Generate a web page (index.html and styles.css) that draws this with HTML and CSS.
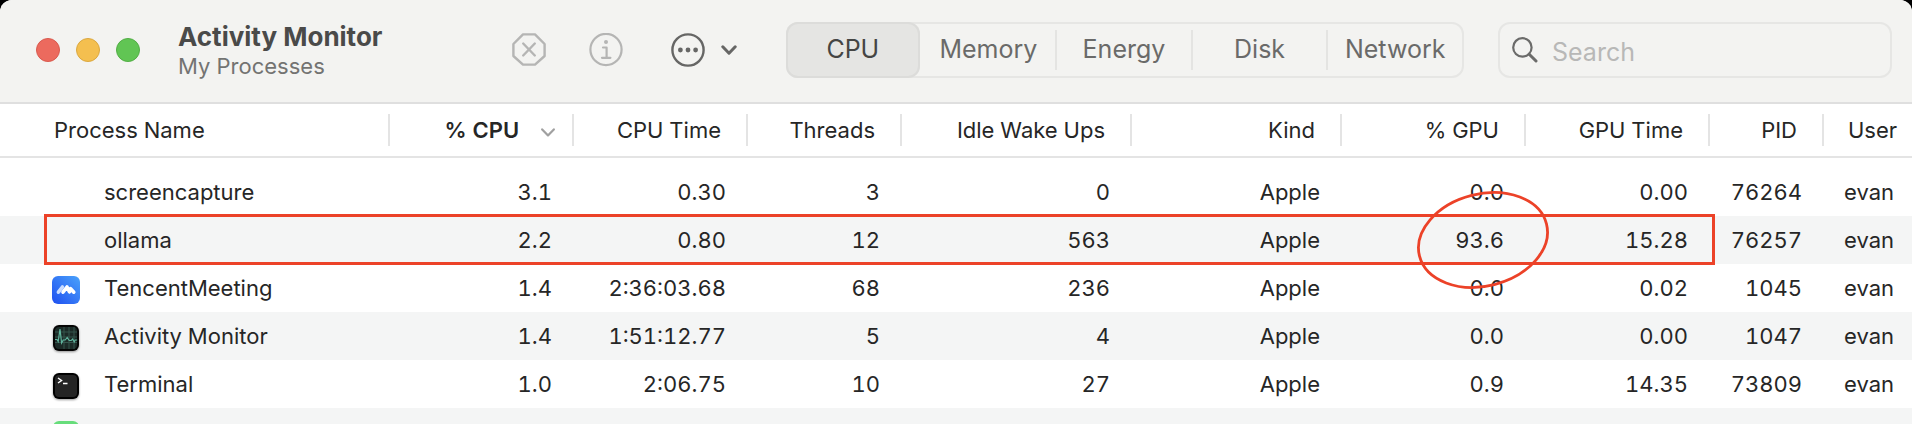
FILE: index.html
```html
<!DOCTYPE html>
<html lang="en">
<head>
    <meta charset="UTF-8">
    <meta name="viewport" content="width=device-width, initial-scale=1.0">
    <title>Activity Monitor</title>
    <link rel="stylesheet" href="styles.css">
</head>
<body>
    <div class="window">
        <header class="toolbar">
            <div class="lights">
                <button class="light red" aria-label="Close"></button>
                <button class="light yellow" aria-label="Minimize"></button>
                <button class="light green" aria-label="Zoom"></button>
            </div>
            <div class="titles">
                <h1>Activity Monitor</h1>
                <p>My Processes</p>
            </div>
            <div class="actions">
                <button class="icon-btn" aria-label="Stop process" disabled>
                    <svg width="34" height="34" viewBox="0 0 34 34" fill="none" stroke="#b5b5b4" stroke-width="2.4" stroke-linecap="round" stroke-linejoin="round">
                        <path d="M11 1.4h12L32.6 11v12L23 31.6H11L1.4 23V11z"/>
                        <path d="M11.2 10.5l11.6 12M22.8 10.5l-11.6 12"/>
                    </svg>
                </button>
                <button class="icon-btn" aria-label="Inspect process" disabled>
                    <svg width="34" height="34" viewBox="0 0 34 34" fill="none" stroke="#b5b5b4" stroke-width="2.2" stroke-linecap="round" stroke-linejoin="round">
                        <circle cx="17" cy="16.5" r="15.6"/>
                        <path d="M14 14.5h3.6v10M13 24.8h8.4"/>
                        <circle cx="17" cy="9" r="2" fill="#b5b5b4" stroke="none"/>
                    </svg>
                </button>
                <button class="icon-btn more" aria-label="More options">
                    <svg width="34" height="34" viewBox="0 0 34 34" fill="none" stroke="#666665" stroke-width="2.4">
                        <circle cx="17" cy="17" r="15.6"/>
                        <g fill="#666665" stroke="none">
                            <circle cx="9.4" cy="17" r="2.4"/>
                            <circle cx="17" cy="17" r="2.4"/>
                            <circle cx="24.6" cy="17" r="2.4"/>
                        </g>
                    </svg>
                    <svg width="16" height="10" viewBox="0 0 16 10" fill="none" stroke="#666665" stroke-width="3" stroke-linecap="round" stroke-linejoin="round">
                        <path d="M1.8 1.8L8 8.2l6.2-6.4"/>
                    </svg>
                </button>
            </div>
            <nav class="tabs">
                <button class="tab active">CPU</button>
                <button class="tab">Memory</button>
                <button class="tab">Energy</button>
                <button class="tab">Disk</button>
                <button class="tab">Network</button>
            </nav>
            <label class="search">
                <svg width="26" height="26" viewBox="0 0 26 26" fill="none" stroke="#6b6b6a" stroke-linecap="round">
                    <circle cx="10.4" cy="10.4" r="9.2" stroke-width="2.2"/>
                    <path d="M17.2 17.2l6.8 6.8" stroke-width="3"/>
                </svg>
                <input type="text" placeholder="Search" aria-label="Search">
            </label>
        </header>

        <main class="content">
            <table class="processes">
                <colgroup>
                    <col>
                    <col class="w-cpu">
                    <col class="w-cputime">
                    <col class="w-threads">
                    <col class="w-idle">
                    <col class="w-kind">
                    <col class="w-gpu">
                    <col class="w-gpu">
                    <col class="w-pid">
                    <col class="w-user">
                </colgroup>
                <thead>
                    <tr>
                        <th class="name"><span>Process Name</span></th>
                        <th class="sorted">
                            <span>% CPU
                                <svg width="14" height="9" viewBox="0 0 14 9" fill="none" stroke="#a0a0a0" stroke-width="2.2" stroke-linecap="round" stroke-linejoin="round">
                                    <path d="M1.2 1.4L7 7.4l5.8-6"/>
                                </svg>
                            </span>
                        </th>
                        <th><span>CPU Time</span></th>
                        <th><span>Threads</span></th>
                        <th><span>Idle Wake Ups</span></th>
                        <th><span>Kind</span></th>
                        <th><span>% GPU</span></th>
                        <th><span>GPU Time</span></th>
                        <th><span>PID</span></th>
                        <th class="user"><span>User</span></th>
                    </tr>
                </thead>
                <tbody>
                    <tr>
                        <td class="name"><span class="app"></span>screencapture</td>
                        <td>3.1</td>
                        <td>0.30</td>
                        <td>3</td>
                        <td>0</td>
                        <td>Apple</td>
                        <td>0.0</td>
                        <td>0.00</td>
                        <td>76264</td>
                        <td class="user">evan</td>
                    </tr>
                    <tr>
                        <td class="name"><span class="app"></span>ollama</td>
                        <td>2.2</td>
                        <td>0.80</td>
                        <td>12</td>
                        <td>563</td>
                        <td>Apple</td>
                        <td>93.6</td>
                        <td>15.28</td>
                        <td>76257</td>
                        <td class="user">evan</td>
                    </tr>
                    <tr>
                        <td class="name">
                            <svg class="app" viewBox="0 0 28 28">
                                <defs>
                                    <linearGradient id="tm" x1="0" y1="1" x2="1" y2="0">
                                        <stop offset="0" stop-color="#1f4ff0"/>
                                        <stop offset="1" stop-color="#4aa2fb"/>
                                    </linearGradient>
                                </defs>
                                <rect width="28" height="28" rx="6" fill="url(#tm)"/>
                                <g fill="none" stroke-width="3.6" stroke-linecap="round" stroke-linejoin="round">
                                    <path d="M6.4 16.2l4-5.2" stroke="#c9dcff"/>
                                    <path d="M11 16.2l4-5.2 2.4 4.8 1.200-3.200 3.200 3.600" stroke="#fff"/>
                                </g>
                            </svg>TencentMeeting
                        </td>
                        <td>1.4</td>
                        <td>2:36:03.68</td>
                        <td>68</td>
                        <td>236</td>
                        <td>Apple</td>
                        <td>0.0</td>
                        <td>0.02</td>
                        <td>1045</td>
                        <td class="user">evan</td>
                    </tr>
                    <tr>
                        <td class="name">
                            <svg class="app shadow" viewBox="0 0 28 28">
                                <rect x="1" y="1" width="26" height="26" rx="6" fill="#050505"/>
                                <rect x="3" y="3" width="22" height="22" rx="4" fill="#1b2a27"/>
                                <path d="M3 8h22M3 13h22M3 18.5h22M12 3v22M17 3v22M22 3v22" stroke="#35544c" stroke-width="1"/>
                                <path d="M3 15.5h2l1.2 2 1.8-12.5 1.6 14 1.6-3h2l2-2.5 2 3h2l1.5-1.5 1.5 3 1-2h2" fill="none" stroke="#5fb39d" stroke-width="1.2"/>
                            </svg>Activity Monitor
                        </td>
                        <td>1.4</td>
                        <td>1:51:12.77</td>
                        <td>5</td>
                        <td>4</td>
                        <td>Apple</td>
                        <td>0.0</td>
                        <td>0.00</td>
                        <td>1047</td>
                        <td class="user">evan</td>
                    </tr>
                    <tr>
                        <td class="name">
                            <svg class="app shadow" viewBox="0 0 28 28">
                                <rect x="1" y="1" width="26" height="26" rx="6" fill="#000"/>
                                <rect x="3" y="3" width="22" height="22" rx="4" fill="#242424"/>
                                <path d="M6 6l3.5 2.5L6 11M11 11.5h4.5" fill="none" stroke="#fff" stroke-width="1.5"/>
                            </svg>Terminal
                        </td>
                        <td>1.0</td>
                        <td>2:06.75</td>
                        <td>10</td>
                        <td>27</td>
                        <td>Apple</td>
                        <td>0.9</td>
                        <td>14.35</td>
                        <td>73809</td>
                        <td class="user">evan</td>
                    </tr>
                    <tr>
                        <td class="name">
                            <svg class="app" viewBox="0 0 28 28">
                                <rect x="1" y="1" width="26" height="26" rx="6" fill="#67dd7b"/>
                            </svg>
                        </td>
                        <td></td>
                        <td></td>
                        <td></td>
                        <td></td>
                        <td></td>
                        <td></td>
                        <td></td>
                        <td></td>
                        <td></td>
                    </tr>
                </tbody>
            </table>
            <!-- red marks over the ollama row -->
            <div class="mark-box"></div>
            <svg class="mark-circle" width="136" height="104" viewBox="-68 -52 136 104">
                <ellipse rx="65.5" ry="46" transform="rotate(-14.3)" fill="none" stroke="#ec4228" stroke-width="2.8"/>
            </svg>
        </main>
    </div>
</body>
</html>
```

FILE: styles.css
```css
* {
    box-sizing: border-box;
}
body {
    margin: 0;
    background: #000;
    font-family: Inter, "Liberation Sans", sans-serif;
    font-size: 22px;
    color: #262626;
}
button {
    font: inherit;
    color: inherit;
    background: none;
    border: none;
    padding: 0;
}
.window {
    height: 100vh;
    background: #fff;
    border-radius: 12px 12px 0 0;
    overflow: hidden;
}

/* toolbar */
.toolbar {
    display: flex;
    align-items: center;
    height: 104px;
    padding: 0 20px 2px 36px;
    background: #f3f3f1;
    border-bottom: 2px solid #dfdfdf;
}
.lights {
    display: flex;
    gap: 16px;
    margin-right: 38px;
}
.light {
    width: 24px;
    height: 24px;
    border-radius: 50%;
    border: 1px solid;
}
.red {
    background: #ec6a5e;
    border-color: #d95a4f;
}
.yellow {
    background: #f4bf4f;
    border-color: #dba840;
}
.green {
    background: #61c554;
    border-color: #52ae45;
}
.titles {
    flex: 1;
    min-width: 300px;
    padding-top: 2px;
    white-space: nowrap;
}
.titles h1 {
    margin: 0;
    font-size: 26px;
    line-height: 30px;
    font-weight: 700;
    color: #4a4a49;
}
.titles p {
    margin: 0;
    font-size: 22px;
    line-height: 28px;
    color: #737372;
}
.actions {
    display: flex;
    align-items: center;
    gap: 43px;
    margin-right: 49px;
}
.icon-btn {
    display: flex;
    align-items: center;
    gap: 16px;
}
.more {
    margin-left: 5px;
}
.tabs {
    display: flex;
    width: 678px;
    height: 56px;
    margin-right: 34px;
    border: 2px solid #e6e6e4;
    border-radius: 12px;
}
.tab {
    position: relative;
    flex: 1;
    padding: 0 0 2px 2px;
    font-size: 25px;
    color: #6a6a69;
}
.tab.active {
    margin: -2px 0 -2px -2px;
    padding-left: 0;
    border-radius: 12px;
    background: #e5e5e3;
    box-shadow: inset 0 0 0 2px #dcdcda;
    color: #454544;
}
.tab + .tab + .tab::before {
    content: "";
    position: absolute;
    left: 0;
    top: 6px;
    bottom: 6px;
    width: 2px;
    background: #e4e4e2;
}
.search {
    display: flex;
    align-items: center;
    gap: 14px;
    width: 394px;
    height: 56px;
    padding: 0 12px;
    border: 2px solid #e6e6e4;
    border-radius: 12px;
}
.search input {
    flex: 1;
    min-width: 0;
    padding: 4px 0 0;
    border: none;
    outline: none;
    background: none;
    font: inherit;
    font-size: 25px;
}
.search input::placeholder {
    color: #b8b8b7;
}

/* process table */
.content {
    position: relative;
}
.processes {
    width: 100%;
    table-layout: fixed;
    border-collapse: separate;
    border-spacing: 0;
    font-variant-numeric: tabular-nums;
}
.w-cpu { width: 184px; }
.w-cputime { width: 174px; }
.w-threads { width: 154px; }
.w-idle { width: 230px; }
.w-kind { width: 210px; }
.w-gpu { width: 184px; }
.w-pid { width: 114px; }
.w-user { width: 88px; }
th {
    height: 54px;
    padding: 0;
    border-bottom: 2px solid #e4e4e4;
    font-weight: 400;
    text-align: right;
    white-space: nowrap;
}
th span {
    display: block;
    line-height: 32px;
    padding-right: 25px;
    border-right: 2px solid #e4e4e4;
}
th.name span {
    padding-left: 54px;
    text-align: left;
}
th.sorted {
    font-weight: 600;
}
th.sorted span {
    padding-right: 17px;
}
th.sorted svg {
    margin-left: 16px;
    vertical-align: middle;
}
th.user span {
    padding: 0 0 0 24px;
    border-right: none;
    text-align: left;
}
tbody::before {
    content: "";
    display: block;
    height: 10px;
}
td {
    height: 48px;
    padding: 0 22px 0 0;
    text-align: right;
    white-space: nowrap;
}
tbody tr:nth-child(even) {
    background: #f4f5f5;
}
td.name {
    padding: 2px 0 0 52px;
    text-align: left;
}
td.user {
    padding: 0 0 0 20px;
    text-align: left;
}
.app {
    display: inline-block;
    width: 28px;
    height: 28px;
    margin-right: 24px;
    vertical-align: middle;
}
.shadow {
    filter: drop-shadow(0 1px 1px rgba(0, 0, 0, 0.4));
}

/* marks */
.mark-box {
    position: absolute;
    left: 44px;
    right: 197px;
    top: 110px;
    height: 51px;
    border: 3px solid #ec4228;
}
.mark-circle {
    position: absolute;
    right: 361px;
    top: 84px;
}
```
